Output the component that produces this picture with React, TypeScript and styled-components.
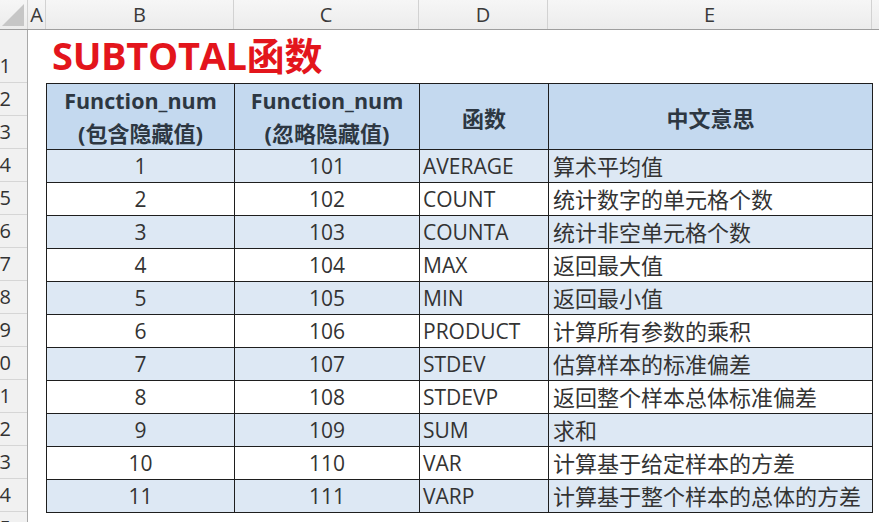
import styled, { createGlobalStyle } from "styled-components";

type Row = {
  withHidden: number;
  ignoreHidden: number;
  name: string;
  meaning: string;
};

const rows: Row[] = [
  { withHidden: 1, ignoreHidden: 101, name: "AVERAGE", meaning: "算术平均值" },
  { withHidden: 2, ignoreHidden: 102, name: "COUNT", meaning: "统计数字的单元格个数" },
  { withHidden: 3, ignoreHidden: 103, name: "COUNTA", meaning: "统计非空单元格个数" },
  { withHidden: 4, ignoreHidden: 104, name: "MAX", meaning: "返回最大值" },
  { withHidden: 5, ignoreHidden: 105, name: "MIN", meaning: "返回最小值" },
  { withHidden: 6, ignoreHidden: 106, name: "PRODUCT", meaning: "计算所有参数的乘积" },
  { withHidden: 7, ignoreHidden: 107, name: "STDEV", meaning: "估算样本的标准偏差" },
  { withHidden: 8, ignoreHidden: 108, name: "STDEVP", meaning: "返回整个样本总体标准偏差" },
  { withHidden: 9, ignoreHidden: 109, name: "SUM", meaning: "求和" },
  { withHidden: 10, ignoreHidden: 110, name: "VAR", meaning: "计算基于给定样本的方差" },
  { withHidden: 11, ignoreHidden: 111, name: "VARP", meaning: "计算基于整个样本的总体的方差" },
];

const columns = [
  { label: "A", width: 18 },
  { label: "B", width: 188 },
  { label: "C", width: 185 },
  { label: "D", width: 129 },
  { label: "E", width: 324 },
];

const FONT = `"Open Sans", "Noto Sans CJK SC", sans-serif`;

const GlobalStyle = createGlobalStyle`
  html, body {
    margin: 0;
    padding: 0;
    background: #ffffff;
  }
  body {
    font-family: ${FONT};
  }
`;

const Sheet = styled.div`
  width: 879px;
  height: 522px;
  overflow: hidden;
  background: #fff;
`;

const ColumnBar = styled.div`
  display: flex;
  height: 30px;
  box-sizing: border-box;
  border-bottom: 1px solid #9e9e9e;
  background: linear-gradient(#f6f6f6, #ececec);
`;

const Corner = styled.div`
  width: 28px;
  flex: none;
  box-sizing: border-box;
  border-right: 1px solid #d2d2d2;
  display: flex;
  align-items: flex-end;
  justify-content: flex-end;
  padding: 0 3px 3px 0;
`;

const ColHead = styled.div<{ $width: number }>`
  width: ${(p) => p.$width}px;
  flex: none;
  box-sizing: border-box;
  border-right: 1px solid #d2d2d2;
  display: flex;
  align-items: center;
  justify-content: center;
  font-size: 20px;
  line-height: 28px;
  color: #3a3a3a;
`;

const Body = styled.div`
  display: flex;
`;

const RowHeads = styled.div`
  width: 28px;
  flex: none;
  box-sizing: border-box;
  border-right: 1px solid #a8a8a8;
  background: #f1f1f1;
  overflow: hidden;
`;

/* Row labels sit right-aligned past the visible edge, so wide numbers are clipped like the crop */
const RowHead = styled.div<{ $height: number }>`
  height: ${(p) => p.$height}px;
  box-sizing: border-box;
  border-bottom: 1px solid #d6d6d6;
  display: flex;
  align-items: flex-end;
  justify-content: flex-end;
  padding: 0 16px 4px 0;
  font-size: 20px;
  line-height: 24px;
  color: #333;
  white-space: nowrap;
`;

const Content = styled.div`
  padding-left: 18px;
`;

const TitleRow = styled.div`
  height: 53px;
  box-sizing: border-box;
  display: flex;
  align-items: flex-end;
  padding: 0 0 6px 6px;
`;

const Title = styled.h1`
  margin: 0;
  font-family: "Open Sans", "Noto Sans CJK SC", sans-serif;
  font-size: 38px;
  line-height: 44px;
  font-weight: 700;
  color: #e3151c;
  letter-spacing: -0.3px;
`;

const Table = styled.div`
  display: grid;
  grid-template-columns: 188px 185px 129px 324px;
  grid-auto-rows: 33px;
  border-top: 1px solid #1e1e1e;
  border-left: 1px solid #1e1e1e;
  width: max-content;
`;

const Cell = styled.div<{ $band?: boolean; $align?: "left" | "center" }>`
  box-sizing: border-box;
  border-right: 1px solid #1e1e1e;
  border-bottom: 1px solid #1e1e1e;
  background: ${(p) => (p.$band ? "#dde8f4" : "#ffffff")};
  display: flex;
  align-items: center;
  justify-content: ${(p) => (p.$align === "left" ? "flex-start" : "center")};
  padding: ${(p) => (p.$align === "left" ? "0 0 0 3px" : "0")};
  font-size: 21px;
  line-height: 30px;
  color: #333;
  white-space: nowrap;
  overflow: hidden;
`;

const Meaning = styled(Cell)`
  font-size: 22px;
  padding-left: 4px;
`;

const HeadCell = styled.div`
  grid-row: span 2;
  box-sizing: border-box;
  border-right: 1px solid #1e1e1e;
  border-bottom: 1px solid #1e1e1e;
  background: #c4d9ef;
  display: flex;
  flex-direction: column;
  align-items: center;
  justify-content: center;
  font-size: 22px;
  font-weight: 700;
  color: #2d3742;
  white-space: nowrap;
`;

const HeadLine = styled.span`
  height: 33px;
  line-height: 33px;
`;

const LatinLine = styled(HeadLine)`
  font-size: 21.5px;
`;

const CornerMark = () => (
  <svg width="22" height="22" viewBox="0 0 22 22">
    <polygon points="22,0 22,22 0,22" fill="#c6c6c6" />
  </svg>
);

export default function App() {
  const rowLabels = Array.from({ length: 15 }, (_, i) => i + 1);
  return (
    <>
      <GlobalStyle />
      <Sheet>
        <ColumnBar>
          <Corner>
            <CornerMark />
          </Corner>
          {columns.map((c) => (
            <ColHead key={c.label} $width={c.width}>
              {c.label}
            </ColHead>
          ))}
          <ColHead $width={20} />
        </ColumnBar>
        <Body>
          <RowHeads>
            {rowLabels.map((n) => (
              <RowHead key={n} $height={n === 1 ? 53 : 33}>
                {n}
              </RowHead>
            ))}
          </RowHeads>
          <Content>
            <TitleRow>
              <Title>SUBTOTAL函数</Title>
            </TitleRow>
            <Table>
              <HeadCell>
                <LatinLine>Function_num</LatinLine>
                <HeadLine>(包含隐藏值)</HeadLine>
              </HeadCell>
              <HeadCell>
                <LatinLine>Function_num</LatinLine>
                <HeadLine>(忽略隐藏值)</HeadLine>
              </HeadCell>
              <HeadCell>函数</HeadCell>
              <HeadCell>中文意思</HeadCell>
              {rows.map((r, i) => {
                const band = i % 2 === 0;
                return [
                  <Cell key={`b${i}`} $band={band}>
                    {r.withHidden}
                  </Cell>,
                  <Cell key={`c${i}`} $band={band}>
                    {r.ignoreHidden}
                  </Cell>,
                  <Cell key={`d${i}`} $band={band} $align="left">
                    {r.name}
                  </Cell>,
                  <Meaning key={`e${i}`} $band={band} $align="left">
                    {r.meaning}
                  </Meaning>,
                ];
              })}
            </Table>
          </Content>
        </Body>
      </Sheet>
    </>
  );
}
